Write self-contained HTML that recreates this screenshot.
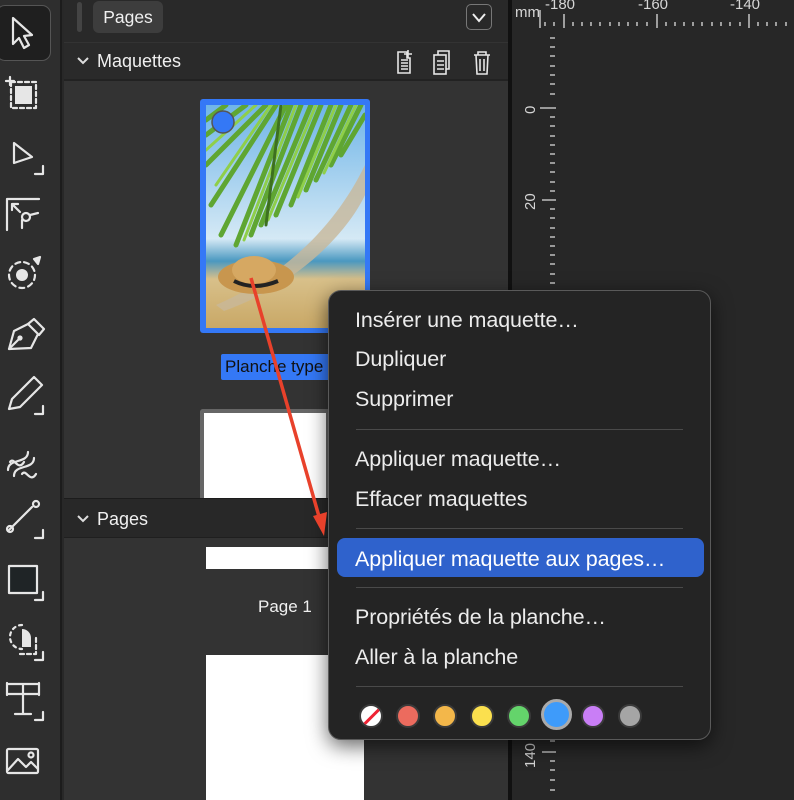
<!DOCTYPE html>
<html><head><meta charset="utf-8"><style>
*{margin:0;padding:0;box-sizing:border-box}
body{width:794px;height:800px;overflow:hidden;background:#282828;font-family:"Liberation Sans",sans-serif;position:relative}
.abs{position:absolute}
.menu div.it{position:absolute;left:26px;font-size:21.5px;color:#ececec;white-space:nowrap;letter-spacing:-0.1px}
.sep{position:absolute;left:27px;right:27px;height:1px;background:#4a4a4a}
.dot{position:absolute;top:413px;width:24px;height:24px;border-radius:50%;border:2px solid #3a3a3a}
</style></head><body>
<!-- left toolbar -->
<div class="abs" style="left:0;top:0;width:62px;height:800px;background:#2e2e2e;border-right:2px solid #1c1c1c"></div>
<div class="abs" style="left:-4px;top:5px;width:55px;height:56px;border-radius:9px;background:#1f1f1f;border:1.5px solid #555"></div>
<svg class="abs" style="left:0;top:0" width="62" height="800" fill="none" stroke="#e6e6e6" stroke-width="2.2" stroke-linejoin="round" stroke-linecap="round">
<path d="M13 18 L13 44 L19 38 L24 48 L29 45 L24 36 L32 35 Z"/>
<rect x="11" y="82" width="25" height="26" stroke-dasharray="4 3"/><rect x="15" y="86" width="17" height="18" fill="#e6e6e6" stroke="none"/><path d="M10 77v8M6 81h8"/>
<path d="M14 143 L14 163 L32 157 Z"/><path d="M35 174h8v-8"/>
<path d="M7 230V199h32M12 204l8 8M12 210v-6h6"/><circle cx="26" cy="217" r="4"/><path d="M22 228v-8M30 215l8-2"/>
<circle cx="22" cy="275" r="13" stroke-dasharray="5 4"/><circle cx="22" cy="275" r="6" fill="#e6e6e6" stroke="none"/><path d="M34 259l6-2-2 7z" fill="#e6e6e6"/>
<path d="M9 349l5-18 14-7 10 10-7 14z"/><path d="M28 324l6-5 10 10-5 6M9 349l10-10"/><circle cx="20" cy="338" r="1.5" fill="#e6e6e6"/>
<path d="M9 409l3-10 22-22 8 8-22 22z"/><path d="M35 414h8v-8"/>
<path d="M8 470c0-12 20-6 20-18M14 476c0-12 20-6 20-18M10 462c4-6 8 10 14 0M22 474c4-6 8 10 14 0"/>
<path d="M9 530l23-23"/><circle cx="10" cy="529" r="3"/><circle cx="36" cy="504" r="3"/><path d="M35 538h8v-8"/>
<rect x="9" y="566" width="28" height="27" fill="#1f2426"/><path d="M35 600h8v-8"/>
<path d="M22 625a12 12 0 1 0 0 24" stroke-dasharray="3 4"/><path d="M22 629a9 9 0 0 1 9 9v9h-9z" fill="#e6e6e6" stroke="none"/><path d="M20 654h16v-16" stroke-dasharray="4 3"/><path d="M35 660h8v-8"/>
<path d="M7 684h32M7 694h32M23 684v30M15 714h16M7 683v12M39 683v12"/><path d="M35 720h8v-8"/>
<rect x="7" y="749" width="31" height="24" rx="1.5"/><path d="M8 770l10-11 8 8 5-5 7 7"/><circle cx="31" cy="755" r="2.5"/>
</svg>
<!-- panel -->
<div class="abs" style="left:64px;top:0;width:444px;height:800px;background:#333"></div>
<div class="abs" style="left:64px;top:0;width:444px;height:42px;background:#292929"></div>
<div class="abs" style="left:77px;top:2px;width:5px;height:30px;border-radius:3px;background:#444"></div>
<div class="abs" style="left:93px;top:1px;width:70px;height:32px;border-radius:6px;background:#3d3d3d;color:#f0f0f0;font-size:17.5px;line-height:32px;text-align:center">Pages</div>
<div class="abs" style="left:466px;top:4px;width:26px;height:26px;border-radius:5px;border:1.5px solid #777"></div>
<svg class="abs" style="left:466px;top:4px" width="26" height="26"><path d="M7 10l6 7 6-7" stroke="#eee" stroke-width="2" fill="none"/></svg>
<div class="abs" style="left:64px;top:43px;width:444px;height:38px;background:#2a2a2a;border-bottom:2px solid #222"></div>
<svg class="abs" style="left:76px;top:56px" width="14" height="10"><path d="M2 2l5 5 5-5" stroke="#ddd" stroke-width="2" fill="none"/></svg>
<div class="abs" style="left:97px;top:51px;color:#f0f0f0;font-size:18px">Maquettes</div>
<svg class="abs" style="left:390px;top:46px" width="110" height="32" fill="none" stroke="#e6e6e6" stroke-width="1.6">
<path d="M8 6h9v6h3v15H8z"/><path d="M11 14h7M11 17h7M11 20h7M11 23h7M18 4v8M14 8h8"/>
<rect x="44" y="9" width="12" height="19"/><path d="M48 9V5h11v18h-3M47 15h7M47 19h7M47 23h7"/>
<path d="M84 9h16M88 9V6h8v3M86 9l1 19h10l1-19M90 13v12M94 13v12"/>
</svg>
<!-- thumbnail -->
<div class="abs" style="left:200px;top:99px;width:170px;height:234px;background:#3478f6;border-radius:3px"></div>
<svg class="abs" style="left:206px;top:105px" width="159" height="223">
<defs><linearGradient id="sky" x1="0" y1="0" x2="0" y2="1"><stop offset="0" stop-color="#6fb5e8"/><stop offset=".6" stop-color="#d5e9f5"/><stop offset=".7" stop-color="#4a98c0"/><stop offset=".78" stop-color="#d8c08a"/><stop offset="1" stop-color="#c9a866"/></linearGradient></defs>
<rect width="159" height="223" fill="url(#sky)"/>
<path d="M159 60C130 120 80 170 10 200l8 6C90 180 140 130 159 90z" fill="#c8b89a" opacity=".8"/>
<g stroke-width="5" stroke-linecap="round" fill="none">
<path d="M60 0L0 60M70 0L5 100M80 0L15 130M85 0L30 140M95 0L45 130M105 0L55 120M115 0L70 110M125 0L85 100M135 0L100 85M145 0L110 75M155 0L125 60M159 10L135 50M40 0L0 30M20 0L0 15" stroke="#5fa632"/>
<path d="M65 0L10 80M90 0L38 135M110 0L62 115M130 0L92 92M150 0L118 68M50 0L0 45" stroke="#8fcf4a" stroke-width="3"/>
<path d="M75 0L60 120" stroke="#3d7020" stroke-width="3"/>
</g>
<ellipse cx="50" cy="172" rx="38" ry="17" fill="#c8964e"/><ellipse cx="48" cy="165" rx="22" ry="14" fill="#d6a862"/><path d="M28 176q20 10 44 0" stroke="#222" stroke-width="4" fill="none"/>
<circle cx="17" cy="17" r="11" fill="#3478f6" stroke="#555" stroke-width="1.5"/>
</svg>
<div class="abs" style="left:221px;top:354px;width:115px;height:26px;background:#3478f6;border-radius:2px;color:#111;font-size:17px;line-height:26px;padding-left:4px;white-space:nowrap;overflow:hidden">Planche type</div>
<div class="abs" style="left:200px;top:409px;width:130px;height:92px;background:#fff;border:4px solid #666;border-bottom:none;border-radius:3px 0 0 0"></div>
<!-- pages header -->
<div class="abs" style="left:64px;top:498px;width:444px;height:40px;background:#282828;border-top:1px solid #1c1c1c;border-bottom:1px solid #1f1f1f"></div>
<svg class="abs" style="left:76px;top:514px" width="14" height="10"><path d="M2 2l5 5 5-5" stroke="#ddd" stroke-width="2" fill="none"/></svg>
<div class="abs" style="left:97px;top:509px;color:#f0f0f0;font-size:18px">Pages</div>
<div class="abs" style="left:206px;top:547px;width:130px;height:22px;background:#fff"></div>
<div class="abs" style="left:258px;top:597px;color:#f0f0f0;font-size:17px">Page 1</div>
<div class="abs" style="left:206px;top:655px;width:158px;height:145px;background:#fff"></div>
<!-- divider & canvas -->
<div class="abs" style="left:508px;top:0;width:4px;height:800px;background:#111"></div>
<div class="abs" style="left:512px;top:0;width:282px;height:800px;background:#272727"></div>
<svg class="abs" style="left:512px;top:0" width="282" height="800" font-family="Liberation Sans" font-size="15" fill="#d6d6d6">
<text x="3" y="17">mm</text>
<text x="33" y="9">-180</text><text x="126" y="9">-160</text><text x="218" y="9">-140</text>
<g stroke="#ddd" stroke-width="1.3">
<path d="M28 10v18M52 14v14M145 14v14M237 14v14"/>
<path d="M33 22v4M42 22v4M61 22v4M70 22v4M79 22v4M88 22v4M98 22v4M107 22v4M116 22v4M125 22v4M135 22v4M154 22v4M163 22v4M172 22v4M181 22v4M190 22v4M200 22v4M209 22v4M218 22v4M228 22v4M246 22v4M255 22v4M264 22v4M274 22v4"/>
<path d="M28 108h16M30 200h14M30 752h14"/>
<path d="M38 38h5M38 47h5M38 56h5M38 66h5M38 75h5M38 84h5M38 94h5M38 117h5M38 126h5M38 136h5M38 145h5M38 154h5M38 163h5M38 172h5M38 182h5M38 191h5M38 209h5M38 218h5M38 228h5M38 237h5M38 246h5M38 255h5M38 264h5M38 274h5M38 283h5M38 741h5M38 761h5M38 770h5M38 780h5M38 790h5"/>
</g>
<text transform="translate(23,114) rotate(-90)">0</text>
<text transform="translate(23,210) rotate(-90)">20</text>
<text transform="translate(23,768) rotate(-90)">140</text>
</svg>
<!-- context menu -->
<div class="abs menu" style="left:328px;top:290px;width:383px;height:450px;background:#242424;border:1px solid #5a5a5a;border-radius:13px;box-shadow:0 6px 20px rgba(0,0,0,.6)">
<div class="it" style="top:17px">Insérer une maquette…</div>
<div class="it" style="top:56px">Dupliquer</div>
<div class="it" style="top:96px">Supprimer</div>
<div class="sep" style="top:138px"></div>
<div class="it" style="top:156px">Appliquer maquette…</div>
<div class="it" style="top:196px">Effacer maquettes</div>
<div class="sep" style="top:237px"></div>
<div class="abs" style="left:8px;top:247px;width:367px;height:39px;background:#2f62cc;border-radius:8px"></div>
<div class="it" style="top:256px;color:#fff">Appliquer maquette aux pages…</div>
<div class="sep" style="top:296px"></div>
<div class="it" style="top:314px">Propriétés de la planche…</div>
<div class="it" style="top:354px">Aller à la planche</div>
<div class="sep" style="top:395px"></div>
<div class="dot" style="left:30px;background:#fff;overflow:hidden"><div style="position:absolute;left:-4px;top:9px;width:30px;height:3px;background:#e23;transform:rotate(-45deg)"></div></div>
<div class="dot" style="left:67px;background:#ec6b5e"></div>
<div class="dot" style="left:104px;background:#f3b74a"></div>
<div class="dot" style="left:141px;background:#fbe04e"></div>
<div class="dot" style="left:178px;background:#64d46b"></div>
<div class="dot" style="left:212px;top:408px;width:31px;height:31px;background:#3e9bfa;border:3px solid #aaa"></div>
<div class="dot" style="left:252px;background:#c97ef6"></div>
<div class="dot" style="left:289px;background:#a5a5a5"></div>
</div>
<!-- red arrow -->
<svg class="abs" style="left:0;top:0" width="794" height="800">
<line x1="251" y1="278" x2="320" y2="520" stroke="#e8412b" stroke-width="3.5"/>
<path d="M313 516l14 -4 -3 24z" fill="#e8412b"/>
</svg>
</body></html>
